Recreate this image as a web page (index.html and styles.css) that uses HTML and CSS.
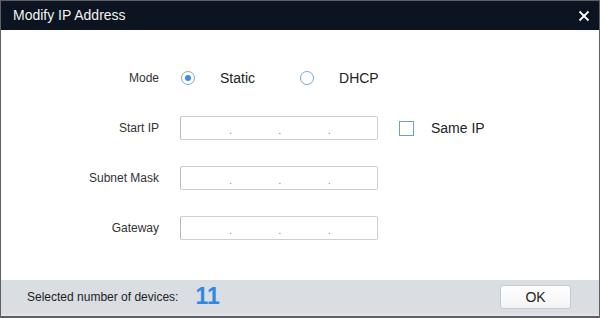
FILE: index.html
```html
<!DOCTYPE html>
<html>
<head>
<meta charset="utf-8">
<link rel="stylesheet" href="styles.css">
</head>
<body>
<div class="window">
  <div class="titlebar">
    <span class="title">Modify IP Address</span>
    <svg class="close" width="12" height="12" viewBox="0 0 12 12"><path d="M1.5 1.5 L10.5 10.5 M10.5 1.5 L1.5 10.5" stroke="#fff" stroke-width="1.8" fill="none"/></svg>
  </div>
  <div class="content">
    <div class="row">
      <div class="label">Mode</div>
      <div class="radio checked"></div>
      <span class="opt">Static</span>
      <div class="radio second"></div>
      <span class="opt">DHCP</span>
    </div>
    <div class="row">
      <div class="label">Start IP</div>
      <div class="ip"><span class="seg"></span><span class="dot">.</span><span class="seg"></span><span class="dot">.</span><span class="seg"></span><span class="dot">.</span><span class="seg"></span></div>
      <div class="check"></div>
      <span class="opt">Same IP</span>
    </div>
    <div class="row">
      <div class="label">Subnet Mask</div>
      <div class="ip"><span class="seg"></span><span class="dot">.</span><span class="seg"></span><span class="dot">.</span><span class="seg"></span><span class="dot">.</span><span class="seg"></span></div>
    </div>
    <div class="row">
      <div class="label">Gateway</div>
      <div class="ip"><span class="seg"></span><span class="dot">.</span><span class="seg"></span><span class="dot">.</span><span class="seg"></span><span class="dot">.</span><span class="seg"></span></div>
    </div>
  </div>
  <div class="footer">
    <span class="sel">Selected number of devices:</span>
    <span class="count">11</span>
    <button class="ok">OK</button>
  </div>
</div>
</body>
</html>
```
FILE: styles.css
```css
html, body {
  margin: 0;
  padding: 0;
  background: #fff;
}
body {
  font-family: "Liberation Sans", Arial, sans-serif;
  color: #222;
}
.window {
  width: 600px;
  height: 318px;
  box-sizing: border-box;
  border: 1px solid #5e6064;
  border-bottom-width: 2px;
  display: flex;
  flex-direction: column;
}
.titlebar {
  height: 29px;
  background: #0b1420;
  display: flex;
  align-items: center;
  padding: 0 9px 0 12px;
  flex: none;
}
.title {
  color: #f2f2f2;
  font-size: 14px;
  flex: 1;
  margin-top: -1px;
}
.close {
  display: block;
}
.content {
  height: 250px;
  flex: none;
  background: #fff;
  padding-top: 36px;
  box-sizing: border-box;
  display: flex;
  flex-direction: column;
  gap: 26px;
}
.row {
  height: 24px;
  display: flex;
  align-items: center;
}
.label {
  width: 158px;
  text-align: right;
  font-size: 12px;
  color: #333;
  margin-right: 21px;
}
.radio {
  width: 12px;
  height: 12px;
  border: 1px solid #7fa6cf;
  border-radius: 50%;
  margin-left: 1px;
  margin-right: 25px;
  position: relative;
  box-sizing: content-box;
}
.radio.checked::after {
  content: "";
  position: absolute;
  left: 3px;
  top: 3px;
  width: 6px;
  height: 6px;
  border-radius: 50%;
  background: #3a8de0;
}
.radio.second {
  margin-left: 45px;
  margin-right: 25px;
}
.opt {
  font-size: 14px;
  color: #222;
}
.ip {
  width: 198px;
  height: 24px;
  box-sizing: border-box;
  border: 1px solid #cfcfcf;
  border-left-color: #b9b9b9;
  border-radius: 2px;
  display: flex;
  align-items: center;
  padding-left: 48px;
  background: #fff;
}
.seg {
  width: 47px;
}
.ip .seg:first-child {
  width: 0;
}
.dot {
  width: 3px;
  font-size: 11px;
  color: #888;
  line-height: 1;
  margin-top: 4px;
}
.check {
  width: 13px;
  height: 13px;
  border: 1px solid #6b9fd2;
  margin-left: 21px;
  margin-right: 17px;
  background: #fff;
}
.footer {
  flex: 1;
  background: #dadde2;
  display: flex;
  align-items: center;
  padding-left: 26px;
  padding-right: 28px;
  border-bottom: 2px solid #e4e5e8;
}
.sel {
  font-size: 12px;
  color: #222;
}
.count {
  font-size: 23px;
  font-weight: bold;
  color: #2f89e3;
  margin-left: 17px;
  flex: 1;
  margin-top: -1px;
}
.ok {
  width: 71px;
  height: 24px;
  border: 1px solid #c6c8cc;
  border-radius: 3px;
  background: linear-gradient(#ffffff, #f4f4f4);
  font-family: "Liberation Sans", Arial, sans-serif;
  font-size: 14px;
  color: #222;
  padding: 0;
  margin-top: -1px;
}
```
